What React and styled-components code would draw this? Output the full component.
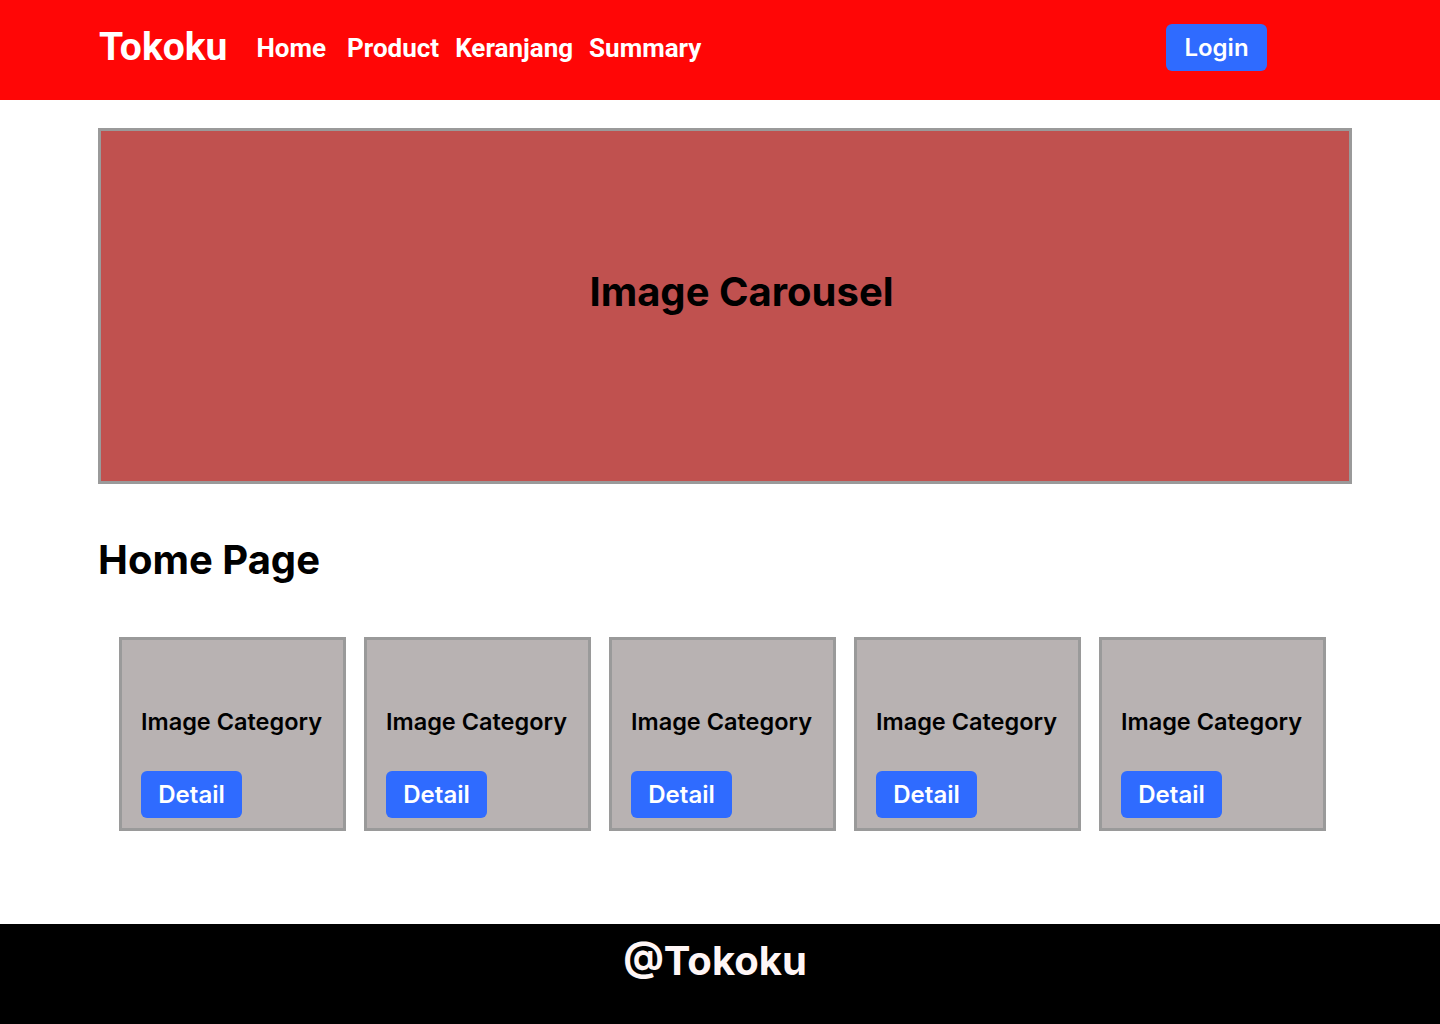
import styled, { createGlobalStyle } from "styled-components";

const GlobalStyle = createGlobalStyle`
  * { box-sizing: border-box; }
  body {
    margin: 0;
    font-family: Inter, "Noto Sans", sans-serif;
    background: #ffffff;
  }
`;

const Page = styled.div`
  min-height: 100vh;
  display: flex;
  flex-direction: column;
`;

const Navbar = styled.header`
  height: 100px;
  background-color: #ff0606;
  display: flex;
  align-items: center;
  padding: 0 173px 5px 99px;
`;

const Logo = styled.div`
  font-family: Roboto, sans-serif;
  font-weight: 700;
  font-size: 39px;
  color: #ffffff;
  margin-right: 29px;
  margin-top: -2px;
`;

const NavLinks = styled.nav`
  display: flex;
  align-items: center;
  gap: 16px;
  flex: 1;
`;

const NavLink = styled.a`
  font-family: Roboto, sans-serif;
  font-weight: 700;
  font-size: 26px;
  color: #ffffff;
  text-decoration: none;
  margin-right: ${(p) => (p.$extra ? "5px" : "0")};
`;

const BlueButton = styled.button`
  border: none;
  background-color: #2f6bff;
  color: #ffffff;
  width: 101px;
  height: 47px;
  border-radius: 6px;
  font-family: Inter, sans-serif;
  font-weight: 600;
  font-size: 24px;
  padding: 0;
`;

const Main = styled.main`
  flex: 1;
  padding: 28px 88px 0 98px;
`;

const Carousel = styled.div`
  height: 356px;
  border: 3px solid #9a9a9a;
  background-color: #c0514f;
  display: flex;
  align-items: center;
  justify-content: center;
  font-weight: 700;
  font-size: 40px;
  color: #000000;
  padding: 0 0 30px 33px;
`;

const Heading = styled.h1`
  margin: 52px 0 0 0;
  font-weight: 700;
  font-size: 40px;
  line-height: 48px;
  color: #000000;
`;

const CardRow = styled.div`
  display: flex;
  gap: 18px;
  padding: 0 21px;
  margin-top: 53px;
`;

const Card = styled.div`
  width: 227px;
  height: 194px;
  border: 3px solid #9a9a9a;
  background-color: #b8b2b2;
  padding: 68px 0 0 19px;
`;

const CardTitle = styled.div`
  font-weight: 600;
  font-size: 23.5px;
  line-height: 28px;
  color: #000000;
  margin-bottom: 35px;
  white-space: nowrap;
`;

const Footer = styled.footer`
  height: 100px;
  background-color: #000000;
  display: flex;
  justify-content: center;
  padding-top: 12px;
  padding-right: 10px;
  font-weight: 700;
  font-size: 40px;
  color: #fff6f6;
`;

const categories = [1, 2, 3, 4, 5];

export default function App() {
  return (
    <Page>
      <GlobalStyle />
      <Navbar>
        <Logo>Tokoku</Logo>
        <NavLinks>
          <NavLink href="#" $extra>Home</NavLink>
          <NavLink href="#">Product</NavLink>
          <NavLink href="#">Keranjang</NavLink>
          <NavLink href="#">Summary</NavLink>
        </NavLinks>
        <BlueButton>Login</BlueButton>
      </Navbar>

      <Main>
        <Carousel>Image Carousel</Carousel>
        <Heading>Home Page</Heading>
        <CardRow>
          {categories.map((id) => (
            <Card key={id}>
              <CardTitle>Image Category</CardTitle>
              <BlueButton>Detail</BlueButton>
            </Card>
          ))}
        </CardRow>
      </Main>

      <Footer>@Tokoku</Footer>
    </Page>
  );
}
